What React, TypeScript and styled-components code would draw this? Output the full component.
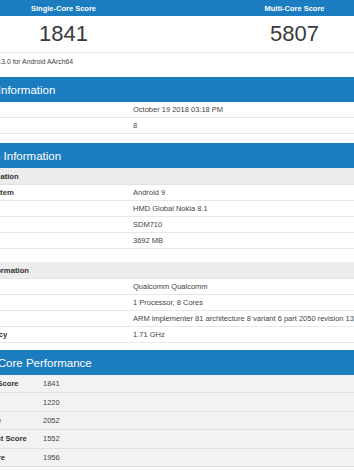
import React from "react";
import styled, { createGlobalStyle } from "styled-components";

const BLUE = "#1b7cbf";

const GlobalStyle = createGlobalStyle`
  body {
    margin: 0;
    background: #fff;
    font-family: "Liberation Sans", Arial, Helvetica, sans-serif;
    color: #333;
  }
`;

// the screenshot is a crop of a wider page, so the sheet is shifted left
const Viewport = styled.div`
  width: 354px;
  height: 472px;
  overflow: hidden;
`;

const Sheet = styled.div`
  width: 470px;
  margin-left: -60px;
`;

const ScoreGrid = styled.div`
  display: grid;
  grid-template-columns: 1fr 1fr;
  padding-left: 8px;
`;

const ScoreColumn = styled.div`
  display: flex;
  flex-direction: column;
`;

const ScoreHeader = styled.div`
  height: 16px;
  background: ${BLUE};
  color: #fff;
  font-size: 7.5px;
  font-weight: bold;
  display: flex;
  align-items: center;
  justify-content: center;
`;

const ScoreValue = styled.div`
  height: 36px;
  border-bottom: 1px solid #ebebeb;
  font-size: 22px;
  color: #3a3a3a;
  display: flex;
  align-items: center;
  justify-content: center;
`;

const ScoreNote = styled.div`
  height: 24px;
  box-sizing: border-box;
  padding: 5px 0 0 11px;
  font-size: 6.8px;
  color: #444;
  white-space: nowrap;
`;

const Section = styled.section<{ $gap: number }>`
  margin-bottom: ${(p) => p.$gap}px;
`;

const SectionHeader = styled.div`
  height: 25px;
  background: ${BLUE};
  color: #fff;
  font-size: 11.5px;
  padding-left: 22px;
  display: flex;
  align-items: center;
  white-space: nowrap;
`;

const SubHeader = styled.div<{ $top?: number }>`
  height: 17px;
  margin-top: ${(p) => p.$top ?? 0}px;
  box-sizing: border-box;
  background: #ececec;
  border-bottom: 1px solid #e2e2e2;
  font-size: 7.7px;
  font-weight: bold;
  padding-left: 7px;
  display: flex;
  align-items: center;
  white-space: nowrap;
`;

const Row = styled.div<{ $perf?: boolean }>`
  display: grid;
  grid-template-columns: ${(p) => (p.$perf ? "95px" : "185px")} 1fr;
  height: ${(p) => (p.$perf ? "18.4px" : "16px")};
  box-sizing: border-box;
  background: ${(p) => (p.$perf ? "#f2f2f2" : "#fff")};
  border-bottom: 1px solid ${(p) => (p.$perf ? "#e0e0e0" : "#e8e8e8")};
  font-size: 7.7px;
  align-items: center;
  white-space: nowrap;
`;

const Label = styled.div<{ $perf?: boolean }>`
  font-weight: bold;
  color: #333;
  padding-left: ${(p) => (p.$perf ? "12px" : "8px")};
`;

const Value = styled.div`
  color: #444;
  padding-left: 8px;
  font-size: 7.5px;
`;

type Pair = [string, string];

const InfoRows = ({ rows, perf }: { rows: Pair[]; perf?: boolean }) => (
  <>
    {rows.map(([k, v]) => (
      <Row key={k} $perf={perf}>
        <Label $perf={perf}>{k}</Label>
        <Value>{v}</Value>
      </Row>
    ))}
  </>
);

const resultInfo: Pair[] = [
  ["Upload Date", "October 19 2018 03:18 PM"],
  ["Views", "8"],
];

const systemInfo: Pair[] = [
  ["Operating System", "Android 9"],
  ["Model", "HMD Global Nokia 8.1"],
  ["Motherboard", "SDM710"],
  ["Memory", "3692 MB"],
];

const processorInfo: Pair[] = [
  ["Name", "Qualcomm Qualcomm"],
  ["Topology", "1 Processor, 8 Cores"],
  ["Identifier", "ARM implementer 81 architecture 8 variant 6 part 2050 revision 13"],
  ["Base Frequency", "1.71 GHz"],
];

const singleCore: Pair[] = [
  ["Single-Core Score", "1841"],
  ["Crypto Score", "1220"],
  ["Integer Score", "2052"],
  ["Floating Point Score", "1552"],
  ["Memory Score", "1956"],
];

export default function App() {
  return (
    <>
      <GlobalStyle />
      <Viewport>
        <Sheet>
          <ScoreGrid>
            <ScoreColumn>
              <ScoreHeader>Single-Core Score</ScoreHeader>
              <ScoreValue>1841</ScoreValue>
              <ScoreNote>Geekbench 4.3.0 for Android AArch64</ScoreNote>
            </ScoreColumn>
            <ScoreColumn>
              <ScoreHeader>Multi-Core Score</ScoreHeader>
              <ScoreValue>5807</ScoreValue>
              <ScoreNote />
            </ScoreColumn>
          </ScoreGrid>

          <Section $gap={9}>
            <SectionHeader>Result Information</SectionHeader>
            <InfoRows rows={resultInfo} />
          </Section>

          <Section $gap={7}>
            <SectionHeader>System Information</SectionHeader>
            <SubHeader>System Information</SubHeader>
            <InfoRows rows={systemInfo} />
            <SubHeader $top={13}>Processor Information</SubHeader>
            <InfoRows rows={processorInfo} />
          </Section>

          <Section $gap={0}>
            <SectionHeader>Single-Core Performance</SectionHeader>
            <InfoRows rows={singleCore} perf />
          </Section>
        </Sheet>
      </Viewport>
    </>
  );
}
